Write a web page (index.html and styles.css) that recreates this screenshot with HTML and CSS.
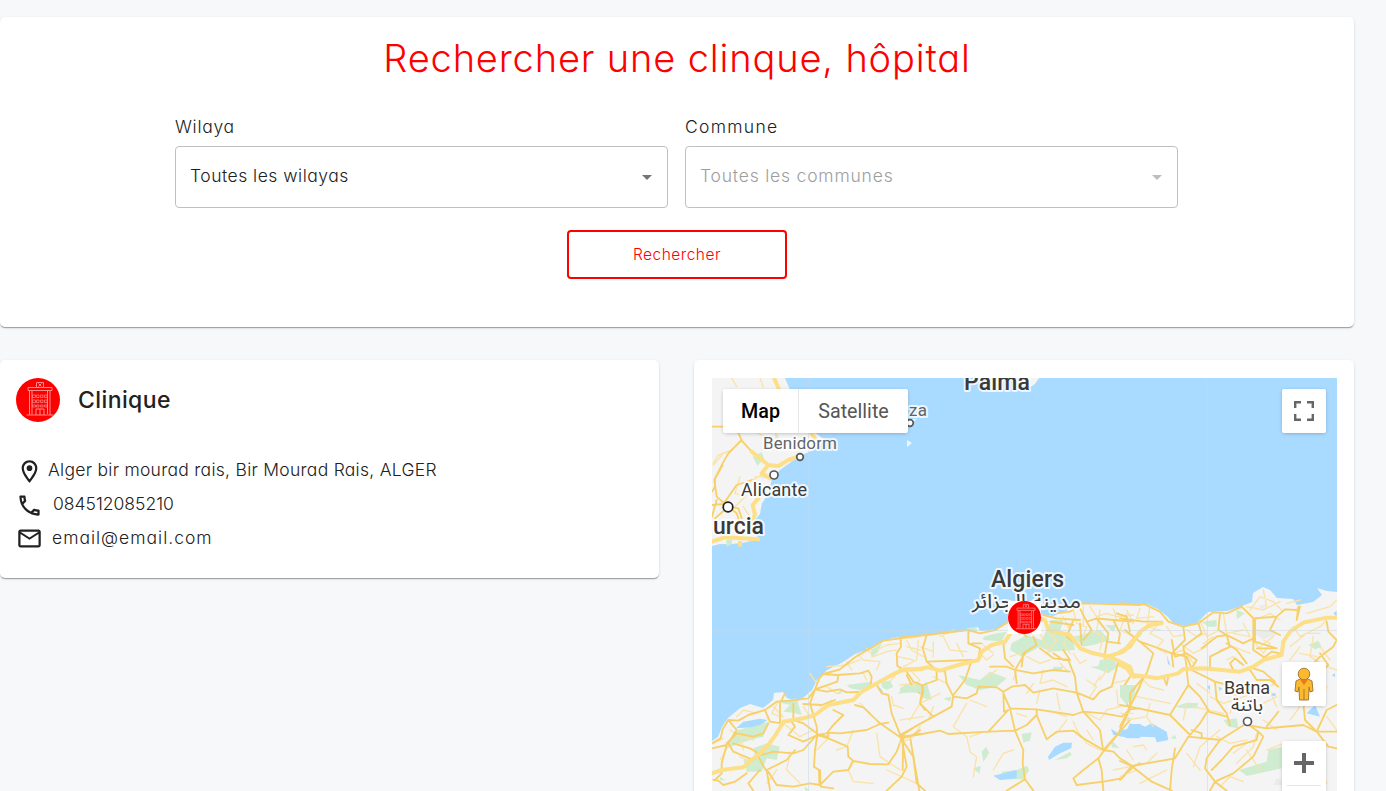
FILE: index.html
```html
<!DOCTYPE html>
<html lang="fr">
<head>
<meta charset="utf-8">
<title>Rechercher une clinique</title>
<link rel="stylesheet" href="styles.css">
</head>
<body>
<svg width="0" height="0" class="defs">
  <symbol id="building" viewBox="0 0 44 44">
    <circle cx="22" cy="22" r="22" fill="#f00"/>
    <g fill="none" stroke="#ff8a8a" stroke-width="1">
      <path d="M10.500 37h27M13.500 37V12.500M34 37V12.500M16 36V13M31.500 36V13M12 9.500h24v3h-24zM20.500 9V4.500h7V9M22.500 5.500l3 3M25.500 5.500l-3 3M20 37v-6h8v6M24 31v6"/>
      <path d="M16.500 17h3v2.500h-3zM20.500 17h2.500v2.500h-2.500zM24.500 17h2.500v2.500h-2.500zM28.500 17h2.500v2.500h-2.500zM16.500 22h3v2.500h-3zM20.500 22h2.500v2.500h-2.500zM24.500 22h2.500v2.500h-2.500zM28.500 22h2.500v2.500h-2.500zM16.500 27h3v2h-3zM20.500 27h2.500v2h-2.500zM24.500 27h2.500v2h-2.500zM28.500 27h2.500v2h-2.500z" stroke-width=".7"/>
    </g>
  </symbol>
</svg>
<main class="page">
  <section class="card search">
    <h1 class="title">Rechercher une clinque, hôpital</h1>
    <div class="fields">
      <div class="field">
        <label class="label label-wilaya">Wilaya</label>
        <div class="select"><span class="value-wilaya">Toutes les wilayas</span><i class="caret"></i></div>
      </div>
      <div class="field">
        <label class="label label-commune">Commune</label>
        <div class="select disabled"><span class="value-commune">Toutes les communes</span><i class="caret"></i></div>
      </div>
    </div>
    <button class="submit">Rechercher</button>
  </section>
  <div class="results">
    <section class="card clinic">
      <header class="clinic-head">
        <svg class="avatar"><use href="#building"/></svg>
        <h2 class="name">Clinique</h2>
      </header>
      <ul class="contact">
        <li><svg class="icon" viewBox="0 0 24 24"><path d="M12 2C8.130 2 5 5.130 5 9c0 5.250 7 13 7 13s7-7.750 7-13c0-3.870-3.130-7-7-7zM7 9c0-2.760 2.240-5 5-5s5 2.240 5 5c0 2.880-2.880 7.190-5 9.880C9.920 16.210 7 11.850 7 9z"/><circle cx="12" cy="9" r="2.500"/></svg><span class="address">Alger bir mourad rais, Bir Mourad Rais, ALGER</span></li>
        <li><svg class="icon" viewBox="0 0 24 24"><path d="M6.540 5c.06.89.21 1.760.45 2.590l-1.200 1.200c-.41-1.200-.67-2.470-.76-3.790h1.510m9.860 12.020c.85.24 1.720.39 2.600.45v1.490c-1.320-.09-2.590-.35-3.800-.75l1.200-1.190M7.500 3H4c-.55 0-1 .45-1 1 0 9.390 7.610 17 17 17 .55 0 1-.45 1-1v-3.490c0-.55-.45-1-1-1-1.240 0-2.450-.2-3.570-.57-.1-.04-.21-.05-.31-.05-.26 0-.51.1-.71.29l-2.200 2.200c-2.830-1.450-5.150-3.760-6.590-6.590l2.200-2.200c.28-.28.36-.67.25-1.020C8.700 6.450 8.500 5.250 8.500 4c0-.55-.45-1-1-1z"/></svg><span class="phone">084512085210</span></li>
        <li><svg class="icon" viewBox="0 0 24 24"><path d="M22 6c0-1.100-.9-2-2-2H4c-1.100 0-2 .9-2 2v12c0 1.100.9 2 2 2h16c1.100 0 2-.9 2-2V6zm-2 0l-8 5-8-5h16zm0 12H4V8l8 5 8-5v10z"/></svg><span class="email">email@email.com</span></li>
      </ul>
    </section>
    <section class="card map-card">
      <div class="map">
        <svg class="canvas" viewBox="712 378 625 413">
          <rect class="sea" x="712" y="378" width="625" height="413"/>
          <path class="land" d="M712 741L718 737L722 727L728 718L740 708L750 704L763 708L773 700L774 693L783 692L787 698L797 701L803 698L812 690L817 680L827 670L843 662L855 654L867 650L880 642L893 638L920 635L950 633L968 629L978 627L980 631L997 629L1010 620L1033 613L1053 616L1073 608L1083 603L1107 604L1147 604L1158 609L1168 617L1173 623L1185 626L1197 623L1208 612L1227 611L1242 606L1252 602L1253 593L1263 587L1270 590L1277 598L1293 599L1297 605L1313 602L1322 595L1317 588L1327 591L1337 592V791H712Z"/>
          <path class="land" d="M1039 378L1035 384L1029 388L1020 384V378ZM907 440l5 3-5 4zM908 426l3-7h6z"/>

          <!-- Spanish coast -->
          <g transform="translate(700 360) scale(.33333)">
            <path class="land" d="M36 54H255L268 85L310 150L345 218L375 240L340 270L295 290L240 330L215 360L206 400L186 430L180 462L165 480L162 520L180 537L130 548L90 553L60 552L36 558Z"/>
            <path class="park" d="M158 290L185 276L192 295L172 318ZM78 540l18-3v15l-16 8zM225 220l12 8-10 8z"/>
            <path class="minor" d="M95 54L110 80M180 54L190 82M40 310L55 285L98 270M70 280L40 315M120 350L105 400L135 410L105 440M165 350L200 352M150 365L185 345M130 440L150 470M175 220L215 240M225 215L240 250"/>
            <path class="road" d="M36 200H70M115 218L125 242L155 275M125 240L85 280L68 310L45 355V380L36 395M68 315L43 360L50 410L85 440M36 435L70 432L110 375L155 360M85 440L110 460L120 490M85 440L45 475M50 420L36 470M85 440L115 445L125 475"/>
            <path class="major" d="M222 54L238 90M155 275L205 315L235 318L265 300L300 288M205 315L185 340L210 355M175 415L158 435L165 465L145 500M36 545L75 532L175 538M120 535v20M335 220l10 15"/>
          </g>

          <!-- western coast -->
          <g transform="translate(700 570) scale(.33333)">
            <path class="park" d="M515 265L513 240L545 220L535 245ZM440 345L510 335L515 348L480 360L450 355ZM545 335L570 332L580 350L560 360L545 350ZM595 372L612 345L660 338V370L625 365ZM230 395L290 385L305 435L280 428L250 425L270 405ZM115 480L205 455L190 500L150 510L80 535L70 530ZM160 535L200 520L240 530L230 570L200 565L185 605L140 605L130 570L165 560ZM60 620l18 12-18-2zM315 650l15 12h-15zM405 372l25-15-8 15z"/>
            <path class="water" d="M108 475L130 455L180 446L202 450L185 463L155 472ZM533 350l8 4 10 14-14-6z"/>
            <path class="minor" d="M470 250L490 270L540 275L530 300M500 235L520 260L560 245L590 240M600 220L560 225L530 240M595 260L640 270M620 230L660 240M610 290L650 270L655 210M380 290L440 285L480 270M440 275L455 300M600 300L570 335M640 340L600 345M380 350L410 370M395 390L360 410M235 395L215 430L240 440M250 440L220 410M110 440L130 420L170 430M90 480L120 500L160 510M120 490L130 540M250 460L300 500L340 480M460 480L440 530L410 540M530 490L540 560L600 600M560 600L650 640M455 575L445 600L460 635L520 640M270 545L260 600L300 640M385 505L350 540M575 380L580 405L610 415M480 400L510 430M640 500L660 470M200 640L230 600M330 310L350 340M490 310L500 330M310 410L330 440M90 520L60 570M120 560L150 575M40 520L70 505M195 420L205 450"/>
            <path class="road" d="M36 520L62 505L68 478L85 450L115 452L145 435L195 420L230 395L270 392L325 385L345 358L358 325L370 312L420 298L465 262L520 230L550 212L600 205L660 197M602 205L603 230L590 250L592 288L610 298M370 312L410 315L480 310L505 302L515 320L512 345M415 315L412 335L345 358L380 365L420 358L440 367L475 366M345 358L330 400L340 435M340 435L350 470L352 495L385 500L385 488L420 490L500 480L540 462L565 458M465 405L490 412L540 460L605 505L620 590L605 620L560 662M605 505L660 490M605 505L590 545L565 583L510 582L460 573L445 600L400 605L360 645L330 640L280 650L230 645L205 605M352 495L385 505L443 530L445 560L460 573M352 495L310 515L265 495L285 470L275 455M352 495L345 540L342 590L357 600L358 640M400 420L430 435L400 465L380 490L350 495M530 345L545 370L565 375L575 430L605 505M620 315L635 345L660 370M660 480L630 500L640 560L658 662M360 600L362 650L400 655M310 402L365 405L405 390M280 400V450L310 460L350 490M195 420L210 455L245 460M255 370L240 400V455M85 450L110 480L85 520L100 545L160 570M36 535L80 525L65 580V610L45 630M80 520L110 490L160 500L190 490L205 460M185 555L220 545L280 550L310 540L350 495M185 555L150 535L100 520M200 600L210 660M180 600L145 640L160 662M200 605L175 560M40 630L55 632L70 645L105 635L140 610M200 600L260 570L285 540"/>
            <path class="major" d="M36 610L65 600L130 592L155 570L180 550L205 525L230 490L250 455L310 445L345 435L385 405L460 390L485 365L585 310L615 298H665"/>
          </g>

          <!-- Algiers and the high plateaux -->
          <g transform="translate(900 570) scale(.33333)">
            <path class="park" d="M250 200L290 190L320 185L305 215L250 210ZM335 220L380 195L425 210L455 150H490L480 185L520 210L525 240L450 245L420 230L365 260L330 240ZM520 200L600 180L630 210L580 225L550 230ZM615 165H650L640 185ZM570 290L595 288L600 270L640 265L655 290L625 310L600 300ZM660 355L680 345H710L695 400L675 385ZM175 315L240 330L270 305L320 325L290 350L240 360L200 345ZM0 355L15 345H70L80 335L95 390L70 385L60 365L0 370ZM365 492L395 487L390 512L370 518ZM245 545L258 530L268 548L250 577ZM220 595L243 587L238 612ZM305 605L350 600L380 587L388 600L370 628L310 628ZM465 570L510 545L515 555L500 565ZM633 508L658 535L635 532ZM680 445l10-5-5 22zM200 175l30-5v15h-25zM460 290h30l-5 10h-25zM130 385l25-5-5 15z"/>
            <path class="water" d="M444 560L465 530L490 518H516L514 535L480 550L447 570ZM280 617L350 600V625L300 630ZM633 476L655 490L680 480L690 460L720 470V505L690 505L640 495Z"/>
            <path class="minor" d="M20 210L35 240L70 260M100 215V260M130 200L150 240L200 245M170 220L190 260M60 230L100 245M30 300L60 330L40 350M100 320L140 340M120 370L60 400L30 450M200 400L160 470L200 500L210 545L230 560L220 620M210 500L240 490M260 410L210 390M240 250L260 270L280 255M250 225L280 250M290 300L260 320M350 300L340 330M360 250L330 260M380 260L420 280L450 270M430 300L420 340L460 330L500 350M480 280L500 300M470 370L480 420M400 340L380 370M500 450L470 490M470 430L500 440M560 330L590 350L570 380M600 320L580 350M640 340L680 330M520 120L530 160L560 170L550 200M550 110V170M570 110L590 140L620 130L650 140L700 135M600 120L590 180M640 115L650 150M570 180L610 200L600 240M680 130L660 180L700 200M490 140L510 180L490 220L510 250M450 190L470 210L440 250M520 250L540 280L560 270M340 540L310 550L280 600M0 450L70 440M120 200L160 180M30 205L60 200M660 410L620 420L600 450L560 430M520 455L540 500L610 540M650 360L655 410M420 360L410 400M560 480L580 510M680 540L700 570M640 600L690 590M0 520L40 500M530 480L560 520L600 540M600 330L620 300M420 190L450 250M350 430L380 440M100 410L85 450"/>
            <path class="road" d="M0 202L80 195L205 180L240 190L285 180L335 150M80 195L68 235L80 275M205 180V220L240 235L235 265M215 220H245M80 275L110 300L135 305M80 275L215 270M110 300V330L70 345L60 400L100 440L0 495M20 305L40 335L65 345L70 365L60 400L75 420M215 272L195 330L160 375L155 410L100 440L45 470L0 500M135 305L140 340L160 380L200 385L230 370L235 350L290 352L310 365L335 350L375 345L400 368L460 355L530 368M270 290H320L345 300L350 340M345 300L400 310L460 300L510 305M310 220L315 265L340 290M375 250L345 300M400 200L410 225L370 250L365 290M460 250L490 270L510 270L490 240M310 365L312 425L325 420L265 485M310 370L330 415L345 482L370 540L368 580L375 628L400 662M330 415L410 418L520 435L550 425L610 430L665 440L690 418L720 415M410 418L410 435L380 465L345 482L265 485L145 492L120 482L50 495L0 500M410 435L440 508L470 485L520 482L550 505L610 540M550 425L600 480L610 545L690 450M530 368L580 388L600 365L635 350L655 275M530 368L550 425M505 270L525 320L530 368M690 418L670 380L665 360L690 320M690 418L655 490L610 540L640 545L660 565L700 590L665 625L610 635L530 645L520 625L550 600L595 565L610 545M595 565L605 600L610 662M375 628L320 662M10 500L8 600M0 500L40 560L50 640L75 662M700 590L720 580M510 270L460 265L420 235M470 130L510 125L550 100L680 104L720 105M520 150L500 200L520 215M540 160L545 225M540 115L560 155L590 145L640 150L700 155M560 155L575 180L550 210M590 145L625 190L615 250M640 150L660 190L655 220M650 130L680 140L690 185M620 215L660 220M345 170L380 200M430 135L470 145L540 150M450 155L520 165"/>
            <path class="major" d="M0 300L50 298L85 292L120 302L175 285L235 270L245 245L275 225L315 215L345 170M335 155L375 130L435 150L445 180L510 195L540 235L580 250L630 260L690 290L700 320L720 318M615 262L670 245L700 210L720 190"/>
          </g>

          <!-- eastern region -->
          <g transform="translate(1120 570) scale(.33333)">
            <path class="shade" d="M395 185L460 180L470 195L430 208ZM415 110l25-10-5 20zM470 625l20 5v15h-30z"/>
            <path class="park" d="M245 155L290 150V170H265ZM350 120L375 130L350 148ZM565 225L595 212L605 230L585 238ZM0 345L50 348L40 380L20 405L0 380ZM165 410L200 398L235 400L230 415H190ZM150 505L165 495L170 508ZM310 450L350 445L355 475L325 470ZM357 600L440 575L445 540L485 530V595L380 618ZM15 455l10-15 5 5z"/>
            <path class="water" d="M0 482L30 475V462H60L75 470L95 460L140 485L145 510L110 517L105 502L70 500L20 505ZM560 430L585 405L600 440ZM640 130l10-8v18zM635 315l10-5v12zM262 350l8-5v18zM295 350l12 5-8 8zM455 370h12v8h-12zM140 255l12 32-8-5z"/>
            <path class="minor" d="M60 115L50 145L100 140M20 120L40 160M90 110L80 170L120 180M110 170L90 190L130 210L110 235L140 250M140 170L160 200L190 195M200 180L230 200L260 190M180 220L220 250L260 230M160 250L190 240L220 280M240 150L260 200L290 185M310 130L320 190L370 180M250 220L280 200M300 240L340 230L390 250M320 270L340 260L360 280M390 120L420 80L460 95L490 125M430 60L440 110M405 150L450 130L480 150M380 110L430 120L480 95M340 190L390 200L370 160M400 180L460 185M400 210L430 250L450 220L430 210M420 230L460 200M500 100L540 90M510 230L560 190L600 190M520 170L540 200L600 170L620 150M560 130L630 110L650 90M580 200L570 260L620 290L650 300M540 230L510 270M540 250L590 260M600 230L630 270M60 320L90 350L130 360M50 380L150 400M200 400L190 450M230 340L270 370M310 340L350 380L330 430M220 410L310 430M270 380L310 400L400 370L470 340M440 340L470 410M410 410L470 380M430 450L470 480M540 410L510 450M300 480L240 530L220 590M290 500L330 520L380 510M380 540L420 600M440 540L490 520M380 520L340 550M40 530L70 525L80 540M20 450L80 440L100 470M0 430H40M90 400L80 440M200 550L240 600M110 550L80 580M300 650L330 620L370 635M0 620L50 600M60 640L140 600M620 350L600 400M620 440L650 480M620 520L600 580L620 640M410 490L400 530L350 580"/>
            <path class="road" d="M0 100L75 103L120 125L145 155L190 170L235 160L280 127L320 130L365 110L400 145L470 140L495 118L530 120L540 110L530 150M0 145L70 155L125 155M15 180L60 215L130 240L155 250L160 290M60 215L100 250L80 310L30 370L30 410M190 170L195 210L155 250L200 260L215 295M155 210L165 260L200 250L230 270L215 295M235 160L245 190L190 230L200 290M245 235L290 200L320 195L370 220L400 205M300 130L295 180L320 195L330 230L270 260V295M320 220L350 240L380 280M400 145V240L430 260M365 110L405 150V215L470 235M430 265L455 245L480 250M470 140L450 180L480 195M410 235H460M200 300L205 345L240 380L265 420L240 460L210 495L150 435L205 345M215 300L285 335L290 390L320 430L330 465M265 425L320 440M285 335L340 350M30 410L150 435M30 410L60 350M70 325L30 410L0 470M0 405L30 410M205 500L300 510L380 460L415 485L430 500L400 560L340 610L285 635L255 595L260 565L300 510M415 485L410 510L340 530L305 570L275 600M205 500L165 565L35 588L0 573M35 588L95 635L155 662M35 588L0 630M165 535L155 600L150 662M380 465L440 475L550 465L590 485L650 485M590 485L620 420L650 405M440 470L475 425M590 485L555 450L550 400M590 485L625 530L650 535M600 250L625 285L590 320M620 155L625 185L650 210L640 230L600 260L580 280M535 110L530 150M340 300L330 280L345 265L370 285M390 300L410 330L450 330L475 350M285 635L270 662M285 635L320 662M400 295L430 305L465 335M215 480L245 490V500M130 320L140 345L145 320"/>
            <path class="major" d="M0 285L20 295L35 315L85 320L110 325L175 310L190 297L250 295L360 305L400 290L430 270L485 255L490 215L510 185L550 158L620 143H655M0 245L30 230L60 185L90 165L125 160"/>
          </g>
          <path class="grid" d="M808.500 378V791M1207.500 378V791M712 630.500H1337"/>

          <g class="city">
            <text class="big" x="964" y="390" textLength="66">Palma</text>
            <text class="small" x="909" y="416" textLength="18">za</text>
            <text class="small" x="763" y="449" textLength="74">Benidorm</text>
            <text class="medium" x="741" y="496" textLength="66">Alicante</text>
            <text class="big" x="713" y="534" textLength="51">urcia</text>
            <text class="big" x="991" y="587" textLength="73">Algiers</text>
            <text class="arabic" x="972" y="608" textLength="109" lengthAdjust="spacingAndGlyphs">مدينة الجزائر</text>
            <text class="medium" x="1224" y="694" textLength="46">Batna</text>
            <text class="arabic small-ar" x="1231" y="711" textLength="32" lengthAdjust="spacingAndGlyphs">باتنة</text>
          </g>
          <g class="dots">
            <circle cx="800" cy="457" r="3.300"/><circle cx="774" cy="475" r="4"/><circle class="dark" cx="728" cy="507" r="4.800"/><circle cx="910" cy="423" r="3.300"/><circle cx="1247.500" cy="721.500" r="4"/>
          </g>
          <rect x="1008" y="601" width="33" height="33" fill="#fff"/>
          <use href="#building" x="1008" y="601" width="33" height="33"/>
        </svg>
        <div class="overlay">
          <div class="top-controls">
            <div class="types"><button class="type active">Map</button><button class="type">Satellite</button></div>
            <button class="control"><svg class="full" viewBox="0 0 20 20"><path d="M1.200 7V1.200H7M13 1.200h5.800V7M18.800 13v5.800H13M7 18.800H1.200V13"/></svg></button>
          </div>
          <div class="side-controls">
            <button class="control"><svg class="pegman" viewBox="0 0 20 34"><path d="M6 12L2 14L1 24L4 25L5 20L5.500 33H14.500L15 20L16 25L19 24L18 14L14 12Z" fill="#fbb92d" stroke="#a77a35"/><circle cx="10" cy="7" r="5.800" fill="#fbb92d" stroke="#a77a35"/><path d="M6 12.500h8L10 18z" fill="#e97824"/><path d="M10 22v11" stroke="#a77a35"/></svg></button>
            <div class="zoom"><svg class="plus" viewBox="0 0 20 20"><path d="M10 0v20M0 10h20"/></svg></div>
          </div>
        </div>
      </div>
    </section>
  </div>
</main>
</body>
</html>
```
FILE: styles.css
```css
* { box-sizing: border-box; }
body { margin: 0; background: #f7f8fa; color: #212121; font-family: Inter, "Open Sans", sans-serif; font-feature-settings: "cv11"; font-weight: 300; font-size: 17.500px; overflow: hidden; }
button { font: inherit; margin: 0; }
.defs { position: absolute; }
.page { height: 791px; width: 1386px; padding-top: 17px; display: flex; flex-direction: column; gap: 33px; overflow: hidden; }
.card { background: #fff; border-radius: 5px; box-shadow: 0 2px 1px -1px rgba(0,0,0,.2), 0 1px 1px rgba(0,0,0,.14), 0 1px 3px rgba(0,0,0,.12); }
.search { flex: none; width: 1354px; height: 310px; padding-top: 17px; display: flex; flex-direction: column; align-items: center; }
.title { margin: 0; height: 50px; line-height: 48px; color: #f00; font-size: 38px; font-weight: 350; letter-spacing: .85px; white-space: nowrap; }
.fields { display: flex; gap: 17px; width: 1003px; margin: 32px 1px 0 0; }
.field { flex: 1; }
.label { display: block; height: 30px; line-height: 22px; white-space: nowrap; }
.label-wilaya { letter-spacing: .7px; }
.label-commune { letter-spacing: 1.300px; }
.value-wilaya { letter-spacing: .5px; }
.value-commune { letter-spacing: .8px; }
.select { height: 62px; border: 1px solid #c0c0c0; border-radius: 4px; padding: 0 15px 0 14px; display: flex; align-items: center; justify-content: space-between; line-height: 58px; }
.select span { margin-top: -2px; white-space: nowrap; }
.caret { border: 5.500px solid transparent; border-top-color: #757575; border-bottom: 0; }
.disabled { color: #9e9e9e; }
.disabled .caret { border-top-color: #bdbdbd; }
.submit { margin-top: 22px; width: 220px; height: 49px; border: 2px solid #f00; border-radius: 4px; background: #fff; color: #f00; font-size: 15.500px; letter-spacing: .5px; }
.results { display: flex; gap: 35px; align-items: flex-start; }
.clinic { width: 659px; height: 218px; padding: 18px 16px; }
.clinic-head { display: flex; align-items: center; gap: 18px; height: 44px; }
.avatar { width: 44px; height: 44px; }
.name { margin: 0; font-size: 23px; font-weight: 450; letter-spacing: .4px; }
.contact { list-style: none; margin: 32px 0 0; padding: 0; }
.contact li { display: flex; align-items: center; height: 33.700px; white-space: nowrap; }
.contact span { margin-top: -2px; }
.icon { width: 27px; height: 27px; fill: #212121; margin-top: 1px; }
.address { margin-left: 5px; letter-spacing: .28px; }
.phone { margin-left: 10px; }
.email { margin-left: 9px; letter-spacing: 1px; }
.map-card { width: 660px; height: 480px; padding: 18px 17px 18px 18px; }
.map { position: relative; height: 444px; }
.canvas { display: block; width: 625px; height: 413px; }
.overlay { position: absolute; inset: 0; padding: 11px; display: flex; flex-direction: column; align-items: stretch; }
.top-controls { display: flex; justify-content: space-between; }
.types { display: flex; width: 185px; height: 44px; background: #fff; border-radius: 2px; box-shadow: 0 1px 4px -1px rgba(0,0,0,.3); }
.type { border: 0; background: none; width: 109px; padding: 0; font: 400 19.700px Roboto, sans-serif; color: #565656; }
.type.active { width: 76px; color: #000; font-weight: 500; border-right: 1px solid #e6e6e6; }
.control { width: 44px; height: 44px; border: 0; padding: 0 1px 0 0; border-radius: 2px; background: #fff; box-shadow: 0 1px 4px -1px rgba(0,0,0,.3); display: flex; align-items: center; justify-content: center; }
.full, .plus { width: 20px; height: 20px; fill: none; stroke: #666; stroke-width: 2.400; }
.plus { stroke-width: 4; }
.side-controls { margin-top: 229px; display: flex; flex-direction: column; align-items: flex-end; gap: 35px; }
.pegman { width: 20px; height: 34px; }
.zoom { width: 44px; height: 88px; padding: 12px 5px 0; background: #fff; border-radius: 2px; text-align: center; box-shadow: 0 1px 4px -1px rgba(0,0,0,.3); }
.plus { display: block; margin: 0 auto; }
.zoom::after { content: ""; display: block; margin-top: 12px; height: 1px; background: #e6e6e6; }
.sea, .water { fill: #a9daff; }
.land { fill: #f4f4f4; }
.park { fill: #d0ecd0; }
.shade { fill: #ebebeb; }
.minor, .road, .major { fill: none; stroke-linejoin: round; stroke-linecap: round; }
.minor { stroke: #fae3a8; stroke-width: 4; }
.road { stroke: #f7d06a; stroke-width: 5.500; }
.major { stroke: #fddf88; stroke-width: 12; }
.grid { stroke: #c8d8e4; stroke-opacity: .5; fill: none; }
.city text { font-family: Roboto, sans-serif; paint-order: stroke; stroke: #fff; stroke-opacity: .8; stroke-width: 4px; stroke-linejoin: round; fill: #3a3a3a; }
.city .big { font-size: 23px; font-weight: 500; }
.city .medium { font-size: 18px; font-weight: 400; }
.city .small { font-size: 17px; font-weight: 400; fill: #606468; }
.city .arabic { font: 400 20px "Noto Sans Arabic", "DejaVu Sans", sans-serif; }
.city .small-ar { font-size: 17px; }
.dots circle { fill: #fff; stroke: #5a5a5a; stroke-width: 1.700; }
.dots .dark { stroke: #222; }
```
